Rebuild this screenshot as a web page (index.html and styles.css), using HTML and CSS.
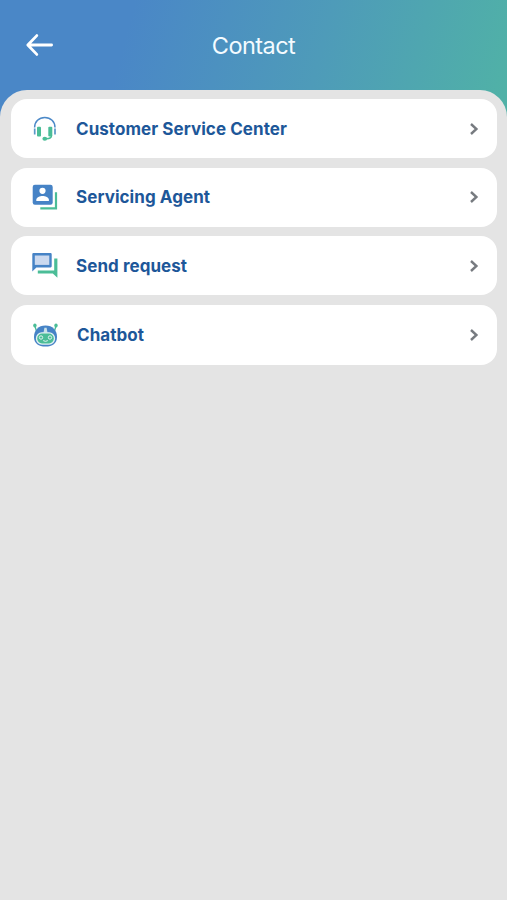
FILE: index.html
```
<!DOCTYPE html>
<html lang="en">
<head>
    <meta charset="UTF-8">
    <meta name="viewport" content="width=device-width, initial-scale=1.0">
    <title>Contact</title>
    <link rel="stylesheet" href="styles.css">
</head>
<body>
    <header class="header">
        <a href="#" class="back" aria-label="Back">
            <svg width="30" height="24" viewBox="0 0 30 24">
                <path d="M26.6 12H3M11.8 2.6L2.8 12l9 9.400" fill="none" stroke="#fff" stroke-width="2.800" stroke-linecap="round" stroke-linejoin="round"/>
            </svg>
        </a>
        <h1 class="title">Contact</h1>
    </header>
    <main class="content">
        <a href="#" class="card">
            <svg class="icon" viewBox="0 0 30 30">
                <path d="M4.600 13.500C4.600 7.500 9 3.500 14.800 3.500S25 7.500 25 13.500" fill="none" stroke="#4c89c8" stroke-width="1.500"/>
                <path d="M4.700 14.500v6M25 14.500v6" stroke="#5b98c8" stroke-width="1.700"/>
                <rect x="7" y="12.800" width="4" height="9.800" rx="1" fill="#4bbd97"/>
                <rect x="18.300" y="12.800" width="4" height="9.800" rx="1" fill="#4bbd97"/>
                <path d="M21.500 21.500c0 2.400-1.600 3.200-5 3.200" fill="none" stroke="#4bbd97" stroke-width="1.500"/>
                <ellipse cx="14.800" cy="24.700" rx="2.400" ry="2" fill="#4bbd97"/>
            </svg>
            <span class="label">Customer Service Center</span>
            <svg class="chevron" viewBox="0 0 10 14"><path d="M2 2l5.400 5L2 12"/></svg>
        </a>
        <a href="#" class="card">
            <svg class="icon" viewBox="0 0 30 30">
                <rect x="2.700" y="2.700" width="20" height="20" rx="2.200" fill="#4683c6"/>
                <circle cx="12.500" cy="8.800" r="3.100" fill="#fff"/>
                <path d="M6.300 19v-1.300c0-2.300 3.600-3.700 6.300-3.700s6.300 1.400 6.300 3.700V19z" fill="#fff"/>
                <path d="M26 10.300v16H10.300" fill="none" stroke="#4bbd97" stroke-width="2.200"/>
            </svg>
            <span class="label">Servicing Agent</span>
            <svg class="chevron" viewBox="0 0 10 14"><path d="M2 2l5.400 5L2 12"/></svg>
        </a>
        <a href="#" class="card">
            <svg class="icon" viewBox="0 0 30 30">
                <path d="M24.200 7.600h3.200v19.200L22.800 22.600H7.800v-3.200h16.400z" fill="#4bbd97"/>
                <path d="M2.300 3.200q0-1.100 1.100-1.100h17.200q1.100 0 1.100 1.100v12.100q0 1.100-1.100 1.100H6.400l-4.100 4.100z" fill="#4683c6"/>
                <path d="M4.800 4.500h14.500v9.400H4.800z" fill="#cbd9ef"/>
            </svg>
            <span class="label">Send request</span>
            <svg class="chevron" viewBox="0 0 10 14"><path d="M2 2l5.400 5L2 12"/></svg>
        </a>
        <a href="#" class="card card-bot">
            <svg class="icon" viewBox="0 0 30 30">
                <path d="M4.900 6l1.400 4.600M26 6l-1.400 4.600" stroke="#4bbd97" stroke-width="1.400"/>
                <ellipse cx="4.900" cy="5.500" rx="1.700" ry="2" fill="#4bbd97"/>
                <ellipse cx="26" cy="5.500" rx="1.700" ry="2" fill="#4bbd97"/>
                <path d="M15.500 5.500C22.600 5.500 27 10.300 27 16.900c0 6.200-4.600 9.700-11.500 9.700S4 23.100 4 16.900C4 10.300 8.400 5.500 15.500 5.500z" fill="#4683c6"/>
                <path d="M14.400 7.800h2.200l.9 5h-4z" fill="#c9e2e8"/>
                <rect x="5.900" y="12.300" width="19.200" height="12.400" rx="6" fill="#e2f2f2"/>
                <rect x="7.200" y="13.600" width="16.600" height="9.800" rx="4.800" fill="#4bbd97"/>
                <g fill="#4bbd97" stroke="#e2f2f2">
                    <circle cx="11" cy="17.500" r="1.700"/>
                    <circle cx="20" cy="17.500" r="1.700"/>
                    <path d="M13.200 20.600q2.300 1.500 4.600 0" fill="none"/>
                </g>
            </svg>
            <span class="label">Chatbot</span>
            <svg class="chevron" viewBox="0 0 10 14"><path d="M2 2l5.400 5L2 12"/></svg>
        </a>
    </main>
</body>
</html>
```
FILE: styles.css
```
body {
    margin: 0;
    height: 900px;
    display: flex;
    flex-direction: column;
    font-family: Inter, "Liberation Sans", sans-serif;
    background: #e4e4e4 linear-gradient(105deg, #4a87c7 0%, #4a87c7 25%, #4e9bb9 62%, #50b1a7 98%) no-repeat;
    background-size: 100% 120px;
}
.header {
    height: 90px;
    flex: none;
    display: grid;
    grid-template-columns: 60px 1fr 60px;
    align-items: center;
}
.back {
    height: 24px;
    padding-left: 25px;
}
.title {
    margin: 0;
    text-align: center;
    font-size: 23.5px;
    font-weight: 400;
    letter-spacing: -0.55px;
    color: #f4fbff;
}
.content {
    flex: 1;
    display: flex;
    flex-direction: column;
    gap: 9.5px;
    padding: 9px 10px 0 11px;
    border-radius: 27px 27px 0 0;
    background: #e4e4e4;
}
.card {
    height: 59px;
    box-sizing: border-box;
    display: flex;
    align-items: center;
    padding: 0 18px 0 19px;
    border-radius: 16px;
    background: #fff;
    text-decoration: none;
}
.icon {
    width: 30px;
    height: 30px;
    margin-right: 16px;
}
.label {
    flex: 1;
    font-size: 17px;
    font-weight: 700;
    letter-spacing: 0.06px;
    color: #1d5799;
}
.card-bot {
    height: 60px;
}
.card-bot .label {
    padding-left: 1px;
}
.chevron {
    width: 10px;
    height: 14px;
    fill: none;
    stroke: #777b80;
    stroke-width: 2.4;
}
```
